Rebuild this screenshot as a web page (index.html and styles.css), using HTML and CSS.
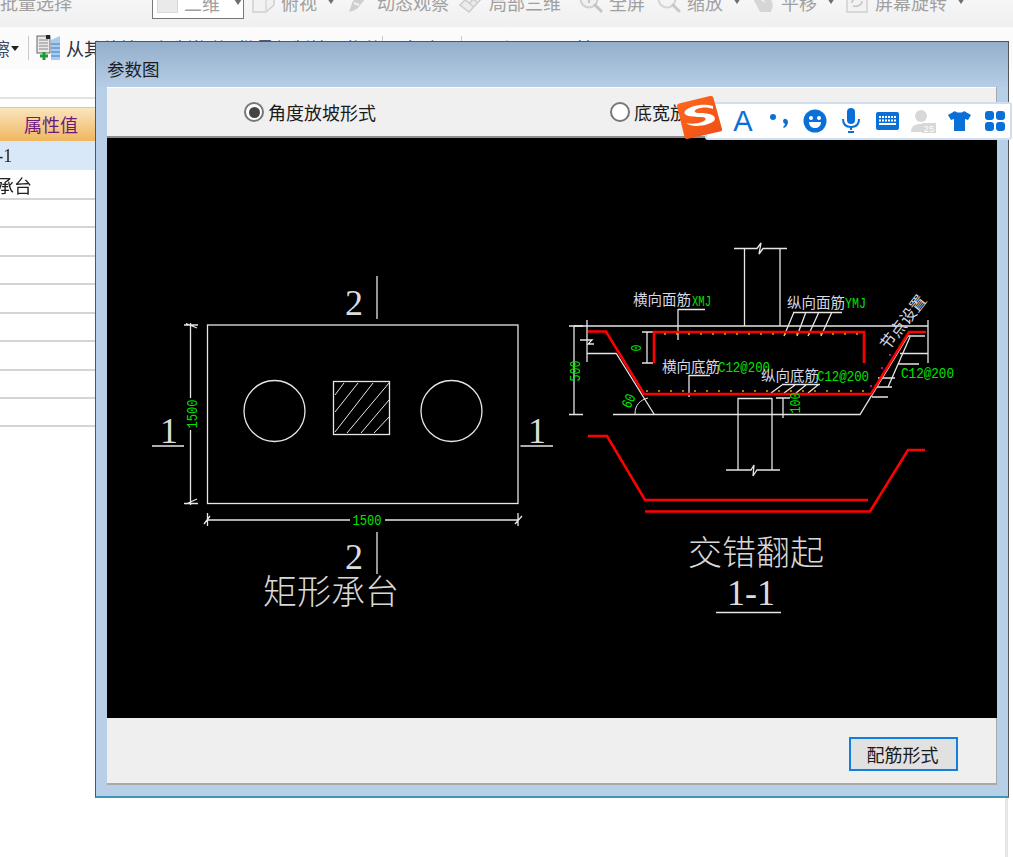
FILE: index.html
```html
<!DOCTYPE html>
<html lang="zh-CN">
<head>
<meta charset="utf-8">
<title>参数图</title>
<link rel="stylesheet" href="styles.css">
</head>
<body>
<div class="app">
  <header class="toolbar-top">
    <span class="tool t-batch">批量选择</span>
    <span class="view-box"><i class="view-swatch"></i><span class="view-label">二维</span><i class="arrow"></i></span>
    <span class="tool t-a"><svg class="ticon" width="24" height="22" viewBox="0 0 24 22"><path d="M2 8l8-7h13v13l-8 7H2z" fill="#f2f2f2" stroke="#cfcfcf" stroke-width="1.500"/><path d="M2 8h13v13M15 8l8-7" fill="none" stroke="#d6d6d6" stroke-width="1.500"/></svg>俯视<i class="arrow"></i></span>
    <span class="tool t-b"><svg class="ticon" width="24" height="22" viewBox="0 0 24 22"><path d="M23 1C15 2 7 7 5 12L2 21c5-1 9-3 11-7 3-3 7-8 10-13z" fill="#cfcfcf"/><path d="M7 12l5 2" stroke="#f2f2f2" stroke-width="2"/></svg>动态观察</span>
    <span class="tool t-c"><svg class="ticon" width="24" height="22" viewBox="0 0 24 22"><path d="M1 14L14 1l9 6-13 14z" fill="#ececec" stroke="#cdcdcd" stroke-width="1.500"/><path d="M6 9l9 7M10 5l9 7M10 13l6-7" fill="none" stroke="#cdcdcd" stroke-width="1.500"/></svg>局部三维</span>
    <span class="tool t-d"><svg class="ticon" width="24" height="22" viewBox="0 0 24 22"><circle cx="10" cy="8" r="8.500" fill="#f0f0f0" stroke="#cfcfcf" stroke-width="2"/><path d="M6 8h8M10 4v8" stroke="#c4c4c4" stroke-width="2"/><path d="M16 14l6 6" stroke="#c4c4c4" stroke-width="3" stroke-linecap="round"/></svg>全屏</span>
    <span class="tool t-e"><svg class="ticon" width="24" height="22" viewBox="0 0 24 22"><circle cx="10" cy="8" r="8.500" fill="#f4f4f4" stroke="#d4d4d4" stroke-width="2"/><path d="M16 14l6 6" stroke="#c8c8c8" stroke-width="3" stroke-linecap="round"/></svg>缩放<i class="arrow"></i></span>
    <span class="tool t-f"><svg class="ticon small" width="21" height="22" viewBox="0 0 21 22"><path d="M2 5l5-3 5 3 6 3 2 6-2 7H7l-3-6-3-5z" fill="#d6d6d6"/><path d="M6 7l6 4" stroke="#efefef" stroke-width="1.500"/></svg>平移<i class="arrow"></i></span>
    <span class="tool t-g"><svg class="ticon" width="24" height="22" viewBox="0 0 24 22"><rect x="2" y="1" width="20" height="20" fill="#f2f2f2" stroke="#d0d0d0" stroke-width="1.500"/><path d="M7 12c0-4 4-6 9-4M17 10c0 4-4 6-9 5" fill="none" stroke="#c4c4c4" stroke-width="1.500"/></svg>屏幕旋转<i class="arrow"></i></span>
  </header>
  <div class="toolbar-second">
    <span class="clip-label">擦</span><i class="arrow dark"></i>
    <i class="sep"></i>
    <svg class="copy-icon" width="25" height="26" viewBox="0 0 25 26"><rect x="1" y="1" width="13" height="17" fill="#e8e8e8" stroke="#666"/><path d="M3 5h9M3 8h9M3 11h9M3 14h9" stroke="#888"/><rect x="10" y="0" width="4" height="4" fill="#223"/><path d="M8 17v8M4 21h8" stroke="#1f9a3a" stroke-width="3"/><path d="M15 5l9-4v24h-9z" fill="#a9ccee"/><path d="M15 9h9M15 13h9M15 17h9M15 21h9" stroke="#3f7fc4"/></svg>
    <span class="row-text">从其他楼层复制构件</span>
    <span class="row-text r2">批量复制楼层构件</span>
    <i class="sep s2"></i>
    <span class="row-text r3">长度</span>
    <i class="sep s3"></i>
    <span class="row-text r4">面积</span>
    <span class="row-text r5">属性</span>
  </div>
  <main class="content">
    <section class="prop-table">
      <div class="header-gap"></div>
      <div class="prop-head">属性值</div>
      <div class="prop-row selected"><span class="val-short">CT-1</span></div>
      <div class="prop-row"><span class="val-long">矩形承台</span></div>
      <div class="prop-row"></div>
      <div class="prop-row"></div>
      <div class="prop-row"></div>
      <div class="prop-row"></div>
      <div class="prop-row"></div>
      <div class="prop-row"></div>
      <div class="prop-row"></div>
      <div class="prop-row"></div>
    </section>
    <div class="scroll-line"></div>
  </main>

  <div class="dialog">
    <div class="dialog-title">参数图</div>
    <div class="panel">
      <div class="radio-bar">
        <label class="radio-item first"><i class="radio on"></i>角度放坡形式</label>
        <label class="radio-item"><i class="radio"></i>底宽放坡形式</label>
      </div>
      <svg class="drawing" width="890" height="580" viewBox="107 138 890 580">
        <!-- plan view -->
        <g class="ln">
          <rect x="207.500" y="325" width="310.500" height="178.500"/>
          <circle cx="274.500" cy="411" r="30.500"/>
          <circle cx="451.500" cy="411" r="30.500"/>
          <rect x="333.500" y="381.500" width="56" height="53"/>
          <path class="thin" d="M335 395L344 383M335 412L358 383M335 432L373 383M347 433L389 383M361 433L389 400M374 433L389 417"/>
          <path d="M377 276V319M377 532V574M152 446H184M520.500 446H553"/>
          <path d="M190.500 323V398M190.500 430V505M186 323.500L197 328M186 504L197 499M184 325H198M184 503.500H198"/>
          <path d="M207 520H350M385 520H518M207.500 513V526M518 513V526M204 524L210 516M515 524L522 516"/>
        </g>
        <text class="cad-num" x="354" y="315" text-anchor="middle">2</text>
        <text class="cad-num" x="354" y="569" text-anchor="middle">2</text>
        <text class="cad-num" x="169" y="443" text-anchor="middle">1</text>
        <text class="cad-num" x="537" y="443" text-anchor="middle">1</text>
        <text class="dim" x="367" y="525" text-anchor="middle" textLength="29" lengthAdjust="spacingAndGlyphs">1500</text>
        <text class="dim" transform="translate(197 414) rotate(-90)" text-anchor="middle" textLength="29" lengthAdjust="spacingAndGlyphs">1500</text>
        <text class="cad-title" x="331" y="604" text-anchor="middle">矩形承台</text>

        <!-- section view -->
        <g class="ln">
          <path d="M734 248.500H757L761 243L759 254L763 248.500H787M744.500 248V326M780 248V326"/>
          <path d="M574 326H928M587 320V362M928 320V363M587 353.500H616M900 353.500H928"/>
          <path d="M613 414.500H860L908 336H925M616 353L654 414"/>
          <path d="M574 326V414.500M569 326H583M569 414.500H583M580 340H592L588 344H594"/>
          <path d="M647 332V363M642 332H653M642 363H653"/>
          <path d="M737.500 398.500H772M738 398V470M772 398V470M726 470H751L754 465L753 476L757 470H780"/>
          <path d="M783 398V418M776 398H790"/>
          <path class="thin" d="M635 414C635 405 640 400 648 398"/>
          <path d="M678 309.500H705M678 309V340M793 312.500H842M794 312L784 336M806 312L797 336M819 312L808 336M832 312L821 336"/>
          <path d="M689 375.500H710M689 375V397M782 384.500H820M782 385L771 393M795 385L784 393M806 385L796 393M818 385L808 393"/>
          <path d="M898 364H919M878 378H895M876 387H892M872 397H888M910 337L888 387"/>
        </g>
        <g class="rebar">
          <path d="M588 331.500H606L644 394H871L909 332H926"/>
          <path d="M654 363V332H864V363"/>
        </g>
        <g class="rebar">
          <path d="M588 436H607L645 500H868"/>
          <path d="M645 511.500H870L908 450H925"/>
        </g>
        <path class="dots" d="M665 334h.01M677 334h.01M689 334h.01M701 334h.01M713 334h.01M725 334h.01M737 334h.01M749 334h.01M761 334h.01M773 334h.01M785 334h.01M797 334h.01M809 334h.01M821 334h.01M833 334h.01M845 334h.01M857 334h.01M647 391h.01M659 391h.01M671 391h.01M683 391h.01M695 391h.01M707 391h.01M719 391h.01M731 391h.01M743 391h.01M755 391h.01M767 391h.01M779 391h.01M791 391h.01M803 391h.01M815 391h.01M827 391h.01M839 391h.01M851 391h.01M863 391h.01"/>
        <path class="magenta" d="M890 355h.01M882 368h.01M871 386h.01"/>
        <text class="note" x="633" y="305">横向面筋</text>
        <text class="dim" x="692" y="306" textLength="19" lengthAdjust="spacingAndGlyphs">XMJ</text>
        <text class="note" x="787" y="308">纵向面筋</text>
        <text class="dim" x="845" y="308" textLength="21" lengthAdjust="spacingAndGlyphs">YMJ</text>
        <text class="note" x="662" y="372">横向底筋</text>
        <text class="dim" x="718" y="372" textLength="52" lengthAdjust="spacingAndGlyphs">C12@200</text>
        <text class="note" x="761" y="381">纵向底筋</text>
        <text class="dim" x="817" y="381" textLength="52" lengthAdjust="spacingAndGlyphs">C12@200</text>
        <text class="dim" x="901" y="378" textLength="53" lengthAdjust="spacingAndGlyphs">C12@200</text>
        <text class="note wide" transform="translate(888 351) rotate(-52)">节点设置</text>
        <text class="dim" transform="translate(580 371) rotate(-90)" text-anchor="middle" textLength="21" lengthAdjust="spacingAndGlyphs">500</text>
        <text class="dim" transform="translate(641 348) rotate(-90)" text-anchor="middle" textLength="7" lengthAdjust="spacingAndGlyphs">0</text>
        <text class="dim" transform="translate(800 403) rotate(-90)" text-anchor="middle" textLength="21" lengthAdjust="spacingAndGlyphs">100</text>
        <text class="dim" transform="translate(633 403) rotate(-65)" text-anchor="middle" textLength="14" lengthAdjust="spacingAndGlyphs">60</text>
        <text class="cad-title" x="756" y="565" text-anchor="middle">交错翻起</text>
        <text class="cad-num" x="751" y="605" text-anchor="middle">1-1</text>
        <path class="ln" d="M716 612.500H781"/>
      </svg>
      <div class="dialog-foot"><button class="form-btn">配筋形式</button></div>
    </div>
  </div>

  <div class="ime">
    <svg class="ime-logo" width="46" height="46" viewBox="0 0 46 46"><defs><linearGradient id="logoFill" x1="0" y1="0" x2="1" y2="1"><stop offset="0" stop-color="#ff6a1e"/><stop offset="1" stop-color="#ee4c14"/></linearGradient></defs><path d="M0 12Q0 10 2 9.500L33 2Q36 1.500 36.500 4L45 35Q45.500 37 43 37.500L10 45Q8 45.500 7.500 43Z" fill="url(#logoFill)"/><path d="M36 12C26 9 12 12 8 17C5 22 15 23 24 23C30 23 30 26 25 28C19 30 13 30 9 29C15 34 31 32 37 27C41 21 31 19 23 19C17 19 16 17 20 15C25 13 31 13 36 15Z" fill="#fff"/></svg>
    <span class="ime-a">A</span>
    <svg width="24" height="20" viewBox="0 0 24 20"><circle cx="6" cy="6" r="3" fill="#0a70d8"/><path d="M17 8a3 3 0 0 1 4 3c0 3-2 5-4 6l-1-1c1-1 2-2 2-3a3 3 0 0 1-1-5z" fill="#0a70d8"/></svg>
    <svg width="24" height="24" viewBox="0 0 24 24"><circle cx="12" cy="12" r="11.500" fill="#0a70d8"/><circle cx="8" cy="9" r="2" fill="#fff"/><circle cx="16" cy="9" r="2" fill="#fff"/><path d="M6 13h12c0 4-3 6-6 6s-6-2-6-6z" fill="#fff"/></svg>
    <svg width="20" height="26" viewBox="0 0 20 26"><rect x="6" y="0" width="8" height="16" rx="4" fill="#0a70d8"/><path d="M2 11c0 5 3 8 8 8s8-3 8-8" fill="none" stroke="#0a70d8" stroke-width="2"/><path d="M10 19v3" stroke="#0a70d8" stroke-width="2"/><rect x="7" y="23" width="6" height="2" fill="#0a70d8"/></svg>
    <svg width="23" height="18" viewBox="0 0 23 18"><rect width="23" height="18" rx="2" fill="#0a70d8"/><path d="M3 5h17M3 8.500h17" stroke="#fff" stroke-width="2" stroke-dasharray="2 1"/><path d="M3 12h17" stroke="#fff" stroke-width="2"/></svg>
    <svg class="ime-avatar" width="25" height="23" viewBox="0 0 25 23"><circle cx="10" cy="6" r="6" fill="#d8d8d8"/><path d="M0 22c0-6 4-8 10-8 2 0 3 0 4 1v7z" fill="#d8d8d8"/><rect x="11" y="13" width="14" height="10" fill="#d8d8d8"/><text class="ime-num" x="12.500" y="21.500">25</text></svg>
    <svg width="23" height="20" viewBox="0 0 23 20"><path d="M7 0c1 2 8 2 9 0l7 4-3 5-3-1v12H6V8L3 9 0 4z" fill="#0a70d8"/></svg>
    <svg width="20" height="20" viewBox="0 0 20 20"><rect x="0" y="0" width="9" height="9" rx="3" fill="#0a70d8"/><rect x="11" y="0" width="9" height="9" rx="3" fill="#0a70d8"/><rect x="0" y="11" width="9" height="9" rx="3" fill="#0a70d8"/><rect x="11" y="11" width="9" height="9" rx="3" fill="#0a70d8"/></svg>
  </div>
</div>
</body>
</html>
```
FILE: styles.css
```css
* { box-sizing: border-box; }
html, body { margin: 0; height: 100%; }
body {
  background: #fff;
  font-family: "Noto Sans CJK SC", "Liberation Sans", sans-serif;
  overflow: hidden;
}
.app { position: relative; width: 1013px; height: 857px; overflow: hidden; filter: blur(.4px); }

/* top toolbar, cut by the window edge */
.toolbar-top {
  display: flex;
  align-items: center;
  height: 27px;
  background: linear-gradient(#f6f6f6, #efefef);
  color: #a0a0a0;
  font-size: 18px;
  line-height: 1;
  overflow: hidden;
}
.tool { display: flex; align-items: center; flex: none; margin-top: -24px; height: 27px; white-space: nowrap; }
.t-batch { width: 152px; }
.t-a { width: 96px; margin-left: 7px; }
.t-b { width: 112px; }
.t-c { width: 120px; }
.t-d { width: 78px; }
.t-e { width: 96px; }
.t-f { width: 92px; }
.t-g { width: 120px; }
.ticon { flex: none; margin-right: 6px; }
.ticon.small { margin-right: 7px; }
.arrow {
  flex: none;
  width: 0;
  height: 0;
  margin-left: 10px;
  margin-top: -2px;
  border-left: 4px solid transparent;
  border-right: 4px solid transparent;
  border-top: 6px solid #6e6e6e;
}
.view-box {
  display: flex;
  align-items: center;
  align-self: flex-start;
  flex: none;
  width: 92px;
  height: 33px;
  margin-top: -14px;
  padding: 14px 5px 13px 4px;
  background: #fff;
  border: 1px solid #777;
}
.view-swatch { flex: none; width: 21px; height: 20px; margin-right: 6px; background: #eaeaea; border: 1px solid #d8d8d8; }
.view-label { flex: none; white-space: nowrap; }
.view-box .arrow { margin-left: 14px; }

/* second toolbar */
.toolbar-second {
  display: flex;
  align-items: center;
  height: 42px;
  background: #fbfbfb;
  font-size: 18px;
  line-height: 1;
  color: #222;
  overflow: hidden;
}
.clip-label { flex: none; margin-left: -8px; color: #3a4a66; }
.arrow.dark { margin: 0 0 0 1px; border-top-color: #222; border-top-width: 5px; }
.sep { flex: none; width: 1px; height: 24px; margin-left: 9px; background: #c8c8c8; }
.copy-icon { flex: none; margin-left: 7px; margin-right: 5px; }
.row-text { flex: none; color: #2a3040; }
.r2 { margin-left: 10px; }
.s2 { margin-left: 0; }
.r3 { margin-left: 22px; }
.s3 { margin-left: 20px; }
.r4 { margin-left: 20px; }
.r5 { margin-left: 40px; }

/* property table behind the dialog */
.content { display: flex; height: 788px; }
.prop-table { flex: 1; display: flex; flex-direction: column; }
.header-gap { height: 38px; border-bottom: 8px solid #fff; box-shadow: inset 0 -2px 0 #e2e2e2; }
.prop-head {
  flex: none;
  height: 34px;
  padding-left: 24px;
  background: linear-gradient(#fbe4bd, #f0b65f);
  border-top: 1px solid #d8c9a8;
  color: #6b1a80;
  font-size: 18px;
  line-height: 33px;
}
.prop-row {
  flex: none;
  height: 28.450px;
  overflow: hidden;
  border-bottom: 2px solid #d4d4d4;
  font-size: 18px;
  line-height: 26px;
  color: #222;
  white-space: nowrap;
}
.prop-row.selected { height: 30.500px; line-height: 30px; background: #d8e8f8; border-bottom-color: #fff; }
.val-short { display: block; font-family: "Liberation Serif", serif; margin-left: -24px; }
.val-long { display: block; margin-left: -40px; }
.scroll-line { flex: none; width: 3px; margin-right: 5px; background: #e6e6e6; }

/* dialog */
.dialog {
  position: absolute;
  left: 95px;
  top: 41px;
  width: 914px;
  height: 757px;
  display: flex;
  flex-direction: column;
  background: #b8cfe8;
  border: 1px solid #555;
  border-bottom: 2px solid #3b97b5;
}
.dialog-title {
  flex: none;
  height: 45px;
  padding: 15px 0 0 11px;
  background: linear-gradient(#94aecb, #b6cde6);
  color: #1c1c1c;
  font-size: 17.500px;
  line-height: 24px;
}
.panel {
  flex: 1;
  display: flex;
  flex-direction: column;
  margin: 0 12px 11px 11px;
  background: #efefef;
  border-bottom: 2px solid #a9a9a9;
  box-shadow: 1px 0 0 #a9a9a9;
}
.radio-bar {
  flex: none;
  display: flex;
  align-items: center;
  height: 51px;
  padding-left: 137px;
  background: #f0f0f0;
  border-bottom: 2px solid #8e8e8e;
  border-top: 1px solid #fff;
  color: #1b1b1b;
  font-size: 18px;
}
.radio-item { display: flex; align-items: center; white-space: nowrap; }
.radio-item.first { width: 366px; }
.radio {
  position: relative;
  flex: none;
  width: 20px;
  height: 20px;
  margin-right: 4px;
  background: #fff;
  border: 2px solid #777;
  border-radius: 50%;
}
.radio.on::after {
  content: "";
  position: absolute;
  inset: 2.500px;
  background: #444;
  border-radius: 50%;
}
.drawing { display: block; flex: none; background: #000; }
.ln { fill: none; stroke: #e6e6e6; stroke-width: 1.300; }
.thin { stroke-width: 1; }
.rebar { fill: none; stroke: #f00; stroke-width: 2.600; }
.dots { stroke: #c8b400; stroke-width: 2; stroke-linecap: round; }
.magenta { stroke: #d020d0; stroke-width: 2; stroke-linecap: round; }
.cad-num { font-family: "Liberation Serif", serif; font-size: 36px; fill: #dcdcdc; }
.cad-title { font-family: "Noto Sans CJK SC", sans-serif; font-size: 34px; font-weight: 300; fill: #d8d8d8; }
.dim { font-family: "Liberation Mono", monospace; font-size: 15px; fill: #00e400; }
.note { font-family: "Noto Sans CJK SC", sans-serif; font-size: 14.500px; fill: #d8d8e4; }
.note.wide { font-size: 16px; }
.dialog-foot { flex: 1; display: flex; align-items: flex-start; justify-content: flex-end; padding: 19px 38px 0 0; }
.form-btn {
  width: 109px;
  height: 34px;
  padding: 0 2px 0 0;
  background: #e1e1e1;
  border: 2px solid #0f7fe0;
  color: #1a1a1a;
  font-family: inherit;
  font-size: 18px;
  line-height: 1;
}

/* input method bar floating over everything */
.ime {
  position: absolute;
  left: 705px;
  top: 102px;
  width: 307px;
  height: 38px;
  display: grid;
  grid-template-columns: repeat(8, 36px);
  justify-items: center;
  align-items: center;
  padding-left: 18px;
  background: #fff;
  border: 2px solid #d0dff0;
  border-radius: 3px;
}
.ime-logo { position: absolute; left: -30px; top: -10px; }
.ime-a { font-family: "Liberation Sans", sans-serif; font-size: 29px; line-height: 1; color: #0a70d8; }
.ime-num { font-family: "Liberation Mono", monospace; font-size: 9px; fill: #fff; }
```
